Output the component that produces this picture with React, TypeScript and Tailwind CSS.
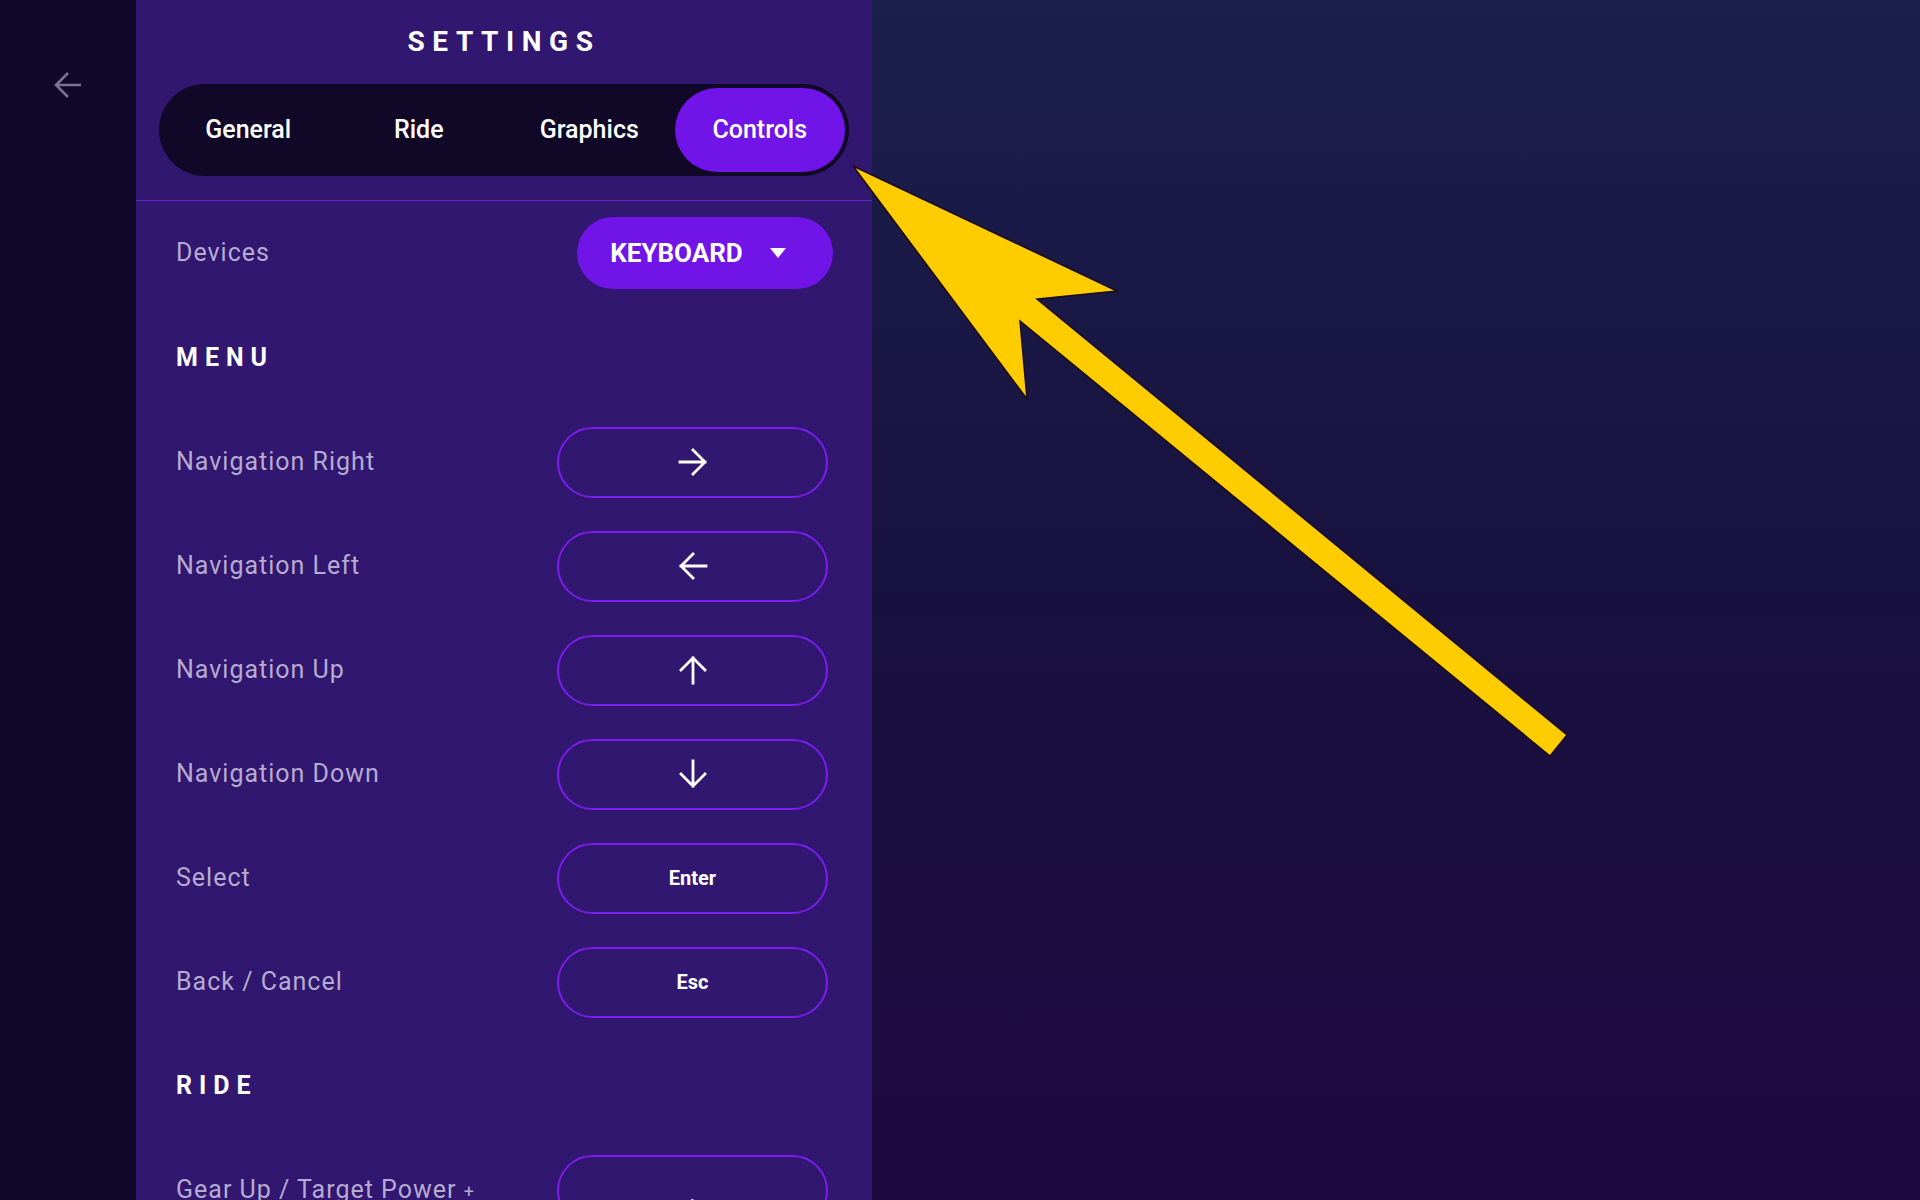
import React from 'react';

const FONT = { fontFamily: 'Roboto, "Liberation Sans", sans-serif' };

type Dir = 'right' | 'left' | 'up' | 'down';

function KeyArrow({ dir }: { dir: Dir }) {
  const rot = { right: 0, down: 90, left: 180, up: 270 }[dir];
  return (
    <svg width="30" height="30" viewBox="0 0 30 30" style={{ transform: `rotate(${rot}deg)` }}>
      <path d="M2 15H27M15 3l12 12-12 12" fill="none" stroke="white" strokeWidth="2.8" strokeLinecap="square" />
    </svg>
  );
}

const menuRows: { label: string; key: React.ReactNode }[] = [
  { label: 'Navigation Right', key: <KeyArrow dir="right" /> },
  { label: 'Navigation Left', key: <KeyArrow dir="left" /> },
  { label: 'Navigation Up', key: <KeyArrow dir="up" /> },
  { label: 'Navigation Down', key: <KeyArrow dir="down" /> },
  { label: 'Select', key: 'Enter' },
  { label: 'Back / Cancel', key: 'Esc' },
];

function BindRow({ label, children }: { label: React.ReactNode; children: React.ReactNode }) {
  return (
    <div className="flex h-[104px] items-center justify-between pl-[40px] pr-[44px]">
      <span className="text-[25px] tracking-[0.04em] text-[#b6abd1]">{label}</span>
      <button className="flex h-[71px] w-[271px] items-center justify-center rounded-full border-2 border-[#7a1ded] text-[20px] font-bold text-white">
        {children}
      </button>
    </div>
  );
}

function SectionHeading({ children, className = '' }: { children: React.ReactNode; className?: string }) {
  return (
    <h2 className={`h-[24px] pl-[40px] text-[25px] font-bold leading-[24px] tracking-[0.28em] text-white ${className}`}>
      {children}
    </h2>
  );
}

export default function App() {
  const tabs = ['General', 'Ride', 'Graphics', 'Controls'];

  return (
    <div className="relative flex h-[1200px] w-[1920px] overflow-hidden" style={FONT}>
      {/* left rail */}
      <aside className="w-[136px] shrink-0 bg-[#12082a] pl-[54px] pt-[71px]">
        <svg width="28" height="28" viewBox="0 0 28 28">
          <path d="M27 14H3M14 2L2 14l12 12" fill="none" stroke="#7b7194" strokeWidth="2.6" />
        </svg>
      </aside>

      {/* settings panel */}
      <section className="w-[736px] shrink-0 overflow-hidden bg-[#31176f]">
        <h1 className="pt-[26px] text-center text-[28px] font-bold leading-[32px] tracking-[0.27em] text-white">
          SETTINGS
        </h1>

        <div className="mx-[23px] mt-[26px] flex h-[92px] rounded-full bg-[#110727] p-[4px]">
          {tabs.map((t) => (
            <div
              key={t}
              className={`flex flex-1 items-center justify-center rounded-full text-[25px] font-medium text-white ${
                t === 'Controls' ? 'bg-[#7014e8]' : ''
              }`}
            >
              {t}
            </div>
          ))}
        </div>

        <div className="mt-[24px] h-px bg-[#5a21c9]" />

        <div className="mt-[16px] flex items-center justify-between pl-[40px] pr-[39px]">
          <span className="text-[25px] tracking-[0.04em] text-[#b6abd1]">Devices</span>
          <button className="flex h-[72px] w-[256px] items-center justify-center gap-[27px] rounded-full bg-[#7014e8] pr-[14px] text-[26px] font-bold text-white">
            KEYBOARD
            <svg width="16" height="10" viewBox="0 0 16 10">
              <path d="M0 0h16L8 10z" fill="white" />
            </svg>
          </button>
        </div>

        <SectionHeading className="mt-[57px]">MENU</SectionHeading>
        <div className="mt-[40px]">
          {menuRows.map((r) => (
            <BindRow key={r.label} label={r.label}>
              {r.key}
            </BindRow>
          ))}
        </div>

        <SectionHeading className="mt-[40px]">RIDE</SectionHeading>
        <div className="mt-[40px]">
          <BindRow
            label={
              <>
                Gear Up / Target Power <span className="text-[18px]">+</span>
              </>
            }
          >
            <span className="pt-[10px]">.</span>
          </BindRow>
        </div>
      </section>

      {/* backdrop */}
      <main className="flex-1 bg-gradient-to-b from-[#1b1f4c] via-[#18113f] to-[#1f0942]" />

      {/* annotation arrow */}
      <svg className="pointer-events-none absolute left-0 top-0" width="1920" height="1200" viewBox="0 0 1920 1200">
        <polygon
          points="853,166 1117,291 1037,299 1567,735 1550,756 1020,321 1027,399"
          fill="#ffcc00"
          stroke="#1a0c10"
          strokeWidth="1.5"
          strokeLinejoin="miter"
        />
      </svg>
    </div>
  );
}
